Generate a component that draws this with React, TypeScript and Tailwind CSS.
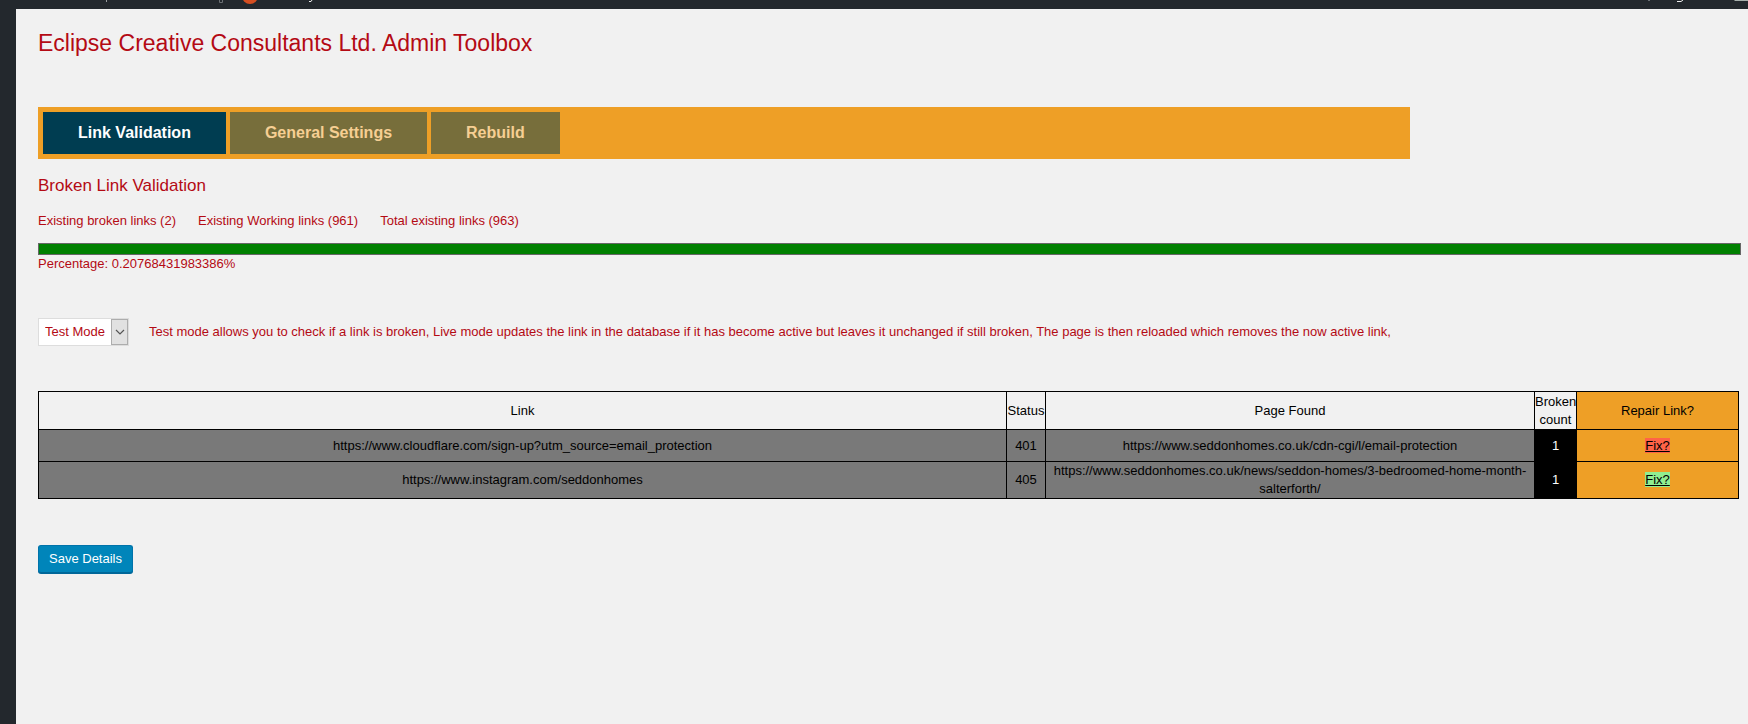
const stats = ["Existing broken links (2)", "Existing Working links (961)", "Total existing links (963)"];

const tabs = ["Link Validation", "General Settings", "Rebuild"];

const rows = [
  {
    link: "https://www.cloudflare.com/sign-up?utm_source=email_protection",
    status: 401,
    page: "https://www.seddonhomes.co.uk/cdn-cgi/l/email-protection",
    count: 1,
    fixClass: "bg-[#ff6347] underline",
    height: "h-8",
  },
  {
    link: "https://www.instagram.com/seddonhomes",
    status: 405,
    page: "https://www.seddonhomes.co.uk/news/seddon-homes/3-bedroomed-home-month-salterforth/",
    count: 1,
    fixClass: "bg-[#90ee90] underline",
    height: "h-9",
  },
];

function TopBar() {
  return (
    <header className="flex h-[9px] justify-between overflow-hidden bg-[#23282d]">
      <svg className="h-[9px] w-[340px]" viewBox="0 0 340 9" aria-hidden="true">
        <path d="M106.500 0v2" stroke="#9a9da0" fill="none" />
        <path d="M219.500 0v2.500h3V0" stroke="#6b6f73" fill="none" />
        <circle cx="250" cy="-4" r="8" fill="#d54e21" />
        <path d="M312 0l-1 1.500h-2" stroke="#eeeeee" fill="none" />
      </svg>
      <svg className="h-[9px] w-[108px]" viewBox="0 0 108 9" aria-hidden="true">
        <path d="M9.500 0l-1 1" stroke="#b4b9be" fill="none" />
        <path d="M37 1.500h4l2-1.500" stroke="#eeeeee" fill="none" />
        <path d="M94 0h14v1H95z" fill="#a7b0ac" />
      </svg>
    </header>
  );
}

function Tabs() {
  return (
    <nav className="box-content flex w-4/5 gap-1 bg-[#ee9f26] p-[5px]">
      {tabs.map((tab, i) => (
        <button
          key={tab}
          type="button"
          className={
            i === 0
              ? "h-[42px] bg-[#003d51] px-[35px] text-[16px] font-bold text-white"
              : "h-[42px] bg-[#776e3b] px-[35px] text-[16px] font-bold text-[#f6cf93]"
          }
        >
          {tab}
        </button>
      ))}
    </nav>
  );
}

function LinkTable() {
  return (
    <table className="w-[calc(100%-2px)] table-fixed border-collapse border border-black text-center leading-[18px] text-black">
      <colgroup>
        <col />
        <col className="w-[39px]" />
        <col className="w-[489px]" />
        <col className="w-[42px]" />
        <col className="w-[162px]" />
      </colgroup>
      <thead>
        <tr className="h-[38px]">
          <th className="border border-black p-0 font-normal">Link</th>
          <th className="border border-black p-0 font-normal">Status</th>
          <th className="border border-black p-0 font-normal">Page Found</th>
          <th className="border border-black p-0 font-normal">Broken count</th>
          <th className="border border-black bg-[#ee9f26] p-0 font-normal">Repair Link?</th>
        </tr>
      </thead>
      <tbody>
        {rows.map((row) => (
          <tr key={row.link} className={row.height}>
            <td className="border border-black bg-[#797979] p-0">{row.link}</td>
            <td className="border border-black bg-[#797979] p-0">{row.status}</td>
            <td className="border border-black bg-[#797979] p-0">{row.page}</td>
            <td className="border border-black bg-black p-0 text-white">{row.count}</td>
            <td className="border border-black bg-[#ee9f26] p-0">
              <a href="#fix" className={row.fixClass}>
                Fix?
              </a>
            </td>
          </tr>
        ))}
      </tbody>
    </table>
  );
}

export default function App() {
  return (
    <div className="flex min-h-screen flex-col bg-[#f1f1f1] font-['Liberation_Sans',Arial,sans-serif] text-[13px] leading-[18px] text-[#b40a14]">
      <TopBar />
      <div className="flex flex-1">
        <aside className="w-4 bg-[#23282d]" />
        <main className="min-w-0 flex-1 pt-5 pr-[7px] pl-[22px]">
          <h1 className="text-[23px] leading-7">Eclipse Creative Consultants Ltd. Admin Toolbox</h1>
          <div className="mt-[50px]">
            <Tabs />
          </div>
          <h2 className="mt-[17px] text-[17px] leading-5">Broken Link Validation</h2>
          <div className="mt-4 flex gap-[22px]">
            {stats.map((stat) => (
              <span key={stat}>{stat}</span>
            ))}
          </div>
          <div className="mt-[13px] h-3 border border-[#666666] bg-[#008000]" />
          <p>Percentage: 0.20768431983386%</p>
          <div className="mt-[45px] flex items-center gap-5">
            <div className="relative shrink-0">
              <select
                aria-label="Mode"
                className="block h-7 w-[91px] appearance-none border border-[#dddddd] bg-white pl-1.5 text-[13px]"
              >
                <option>Test Mode</option>
                <option>Live Mode</option>
              </select>
              <span className="pointer-events-none absolute inset-y-px right-px flex w-[17px] items-center justify-center border border-[#adadad] bg-[#e1e1e1]">
                <svg className="h-2 w-2.5" viewBox="0 0 10 8" aria-hidden="true">
                  <path d="M1 2l4 4 4-4" fill="none" stroke="#555555" strokeWidth="1.200" />
                </svg>
              </span>
            </div>
            <p>
              Test mode allows you to check if a link is broken, Live mode updates the link in the database if it has
              become active but leaves it unchanged if still broken, The page is then reloaded which removes the now
              active link,
            </p>
          </div>
          <div className="mt-[45px]">
            <LinkTable />
          </div>
          <button
            type="button"
            className="mt-[46px] h-7 rounded-[3px] border border-[#0073aa] border-b-[#006799] bg-[#0085ba] px-2.5 text-[13px] text-white shadow-[0_1px_0_#006799]"
          >
            Save Details
          </button>
        </main>
      </div>
    </div>
  );
}
